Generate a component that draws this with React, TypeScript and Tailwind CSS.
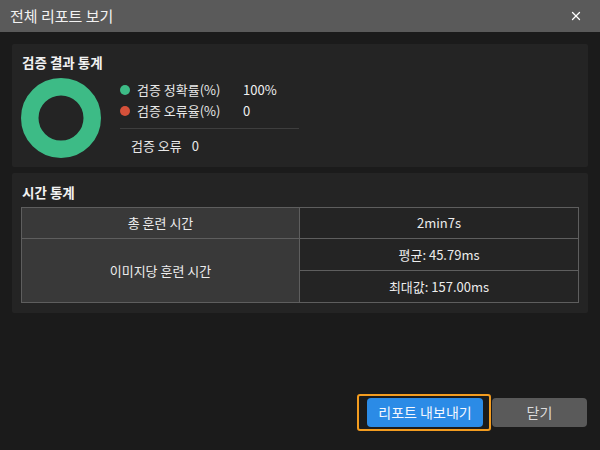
import { X } from 'lucide-react';

const font = { fontFamily: '"Noto Sans CJK KR", "Noto Sans", sans-serif' };

function Donut() {
  return (
    <svg width="80" height="80" viewBox="0 0 80 80" className="shrink-0">
      <circle cx="40" cy="40" r="31.25" fill="none" stroke="#3dbb86" strokeWidth="17.5" />
    </svg>
  );
}

function LegendRow({ color, label, value }: { color: string; label: string; value: string }) {
  return (
    <div className="flex h-[21px] items-center">
      <span className="h-[10px] w-[10px] rounded-full" style={{ backgroundColor: color }} />
      <span className="ml-[7px] w-[106px] text-[13px] text-[#e8e8e8]">{label}</span>
      <span className="text-[13px] text-[#f0f0f0]">{value}</span>
    </div>
  );
}

export default function App() {
  return (
    <div className="flex h-[450px] w-[600px] flex-col bg-[#1b1b1b] text-[#e8e8e8]" style={font}>
      <div className="flex h-8 shrink-0 items-center justify-between bg-[#5a5a5a] pl-[10px] pr-[17px]">
        <span className="text-[15px] text-[#f2f2f2]">전체 리포트 보기</span>
        <X className="h-[14px] w-[14px] text-white" strokeWidth={2.2} />
      </div>

      <div className="flex flex-1 flex-col px-3 pt-3">
        <div className="h-[123px] rounded-[2px] bg-[#242424] pl-[9px] pt-[8px]">
          <div className="ml-px text-[13.5px] font-bold leading-5 text-[#f2f2f2]">검증 결과 통계</div>
          <div className="mt-[6px] flex">
            <Donut />
            <div className="ml-[19px] mt-[1px] flex flex-col">
              <LegendRow color="#3dbb86" label="검증 정확률(%)" value="100%" />
              <LegendRow color="#d5513a" label="검증 오류율(%)" value="0" />
              <div className="mt-[7px] w-[179px] border-t border-[#3e3e3e]" />
              <div className="ml-[11px] mt-[7px] flex items-center text-[13px]">
                <span>검증 오류</span>
                <span className="ml-[10px]">0</span>
              </div>
            </div>
          </div>
        </div>

        <div className="mt-[6px] rounded-[2px] bg-[#242424] px-[9px] pb-[10px] pt-[9px]">
          <div className="ml-px text-[13.5px] font-bold leading-5 text-[#f2f2f2]">시간 통계</div>
          <table className="mt-[5px] w-full border-collapse text-[13px] text-[#ececec]">
            <tbody>
              <tr className="h-[31px]">
                <td className="w-[278px] border border-[#5e5e5e] bg-[#393939] text-center">총 훈련 시간</td>
                <td className="border border-[#5e5e5e] text-center">2min7s</td>
              </tr>
              <tr className="h-[32px]">
                <td rowSpan={2} className="border border-[#5e5e5e] bg-[#393939] text-center">이미지당 훈련 시간</td>
                <td className="border border-[#5e5e5e] text-center">평균: 45.79ms</td>
              </tr>
              <tr className="h-[32px]">
                <td className="border border-[#5e5e5e] text-center">최대값: 157.00ms</td>
              </tr>
            </tbody>
          </table>
        </div>

        <div className="mt-auto mb-[19px] mr-px flex items-center justify-end">
          <div className="rounded-[3px] border-2 border-[#f39c1f] py-[2px] pl-[8px] pr-[6px]">
            <button className="h-[29px] w-[116px] rounded-[4px] bg-[#2b8be6] text-[14px] text-[#f4f8ff]">
              리포트 내보내기
            </button>
          </div>
          <button className="ml-px h-[29px] w-[95px] rounded-[4px] bg-[#5a5a5a] text-[14px] text-[#dcdcdc]">
            닫기
          </button>
        </div>
      </div>
    </div>
  );
}
